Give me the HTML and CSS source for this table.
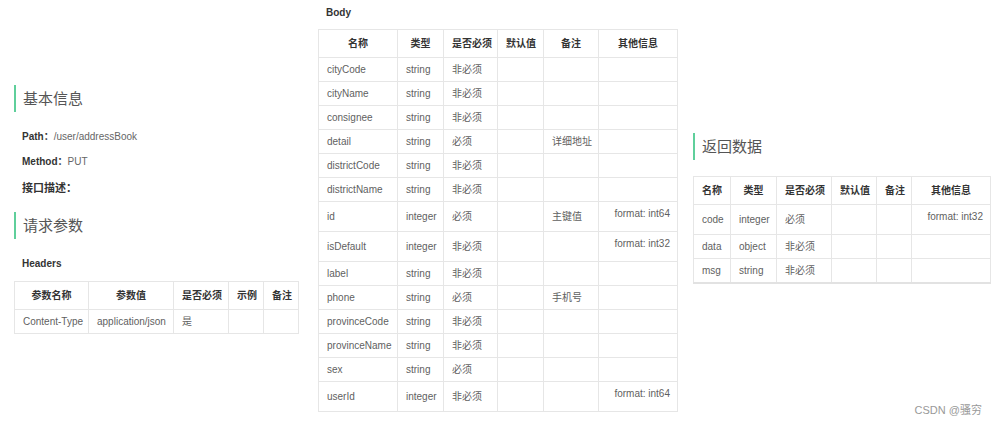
FILE: index.html
```html
<!DOCTYPE html>
<html lang="zh-CN">
<head>
<meta charset="utf-8">
<title>接口文档</title>
<link rel="stylesheet" href="styles.css">
</head>
<body>
<div class="page">
  <section class="col col-left">
    <h2 class="section-title">基本信息</h2>
    <p class="info info-path"><b>Path：</b><span>/user/addressBook</span></p>
    <p class="info info-method"><b>Method：</b><span>PUT</span></p>
    <p class="info info-desc"><b>接口描述：</b></p>
    <h2 class="section-title title-req">请求参数</h2>
    <h3 class="sub-title sub-headers">Headers</h3>
    <table class="tbl tbl-headers">
      <colgroup>
        <col class="w74"><col class="w85"><col class="w55"><col class="w35"><col class="w35">
      </colgroup>
      <thead>
        <tr><th>参数名称</th><th>参数值</th><th>是否必须</th><th>示例</th><th>备注</th></tr>
      </thead>
      <tbody>
        <tr><td>Content-Type</td><td>application/json</td><td>是</td><td></td><td></td></tr>
      </tbody>
    </table>
  </section>

  <section class="col col-mid">
    <h3 class="sub-title sub-body">Body</h3>
    <table class="tbl tbl-body">
      <colgroup>
        <col class="w79"><col class="w46"><col class="w54"><col class="w46"><col class="w55"><col class="w79">
      </colgroup>
      <thead>
        <tr><th>名称</th><th>类型</th><th>是否必须</th><th>默认值</th><th>备注</th><th>其他信息</th></tr>
      </thead>
      <tbody>
        <tr><td>cityCode</td><td>string</td><td>非必须</td><td></td><td></td><td></td></tr>
        <tr><td>cityName</td><td>string</td><td>非必须</td><td></td><td></td><td></td></tr>
        <tr><td>consignee</td><td>string</td><td>非必须</td><td></td><td></td><td></td></tr>
        <tr><td>detail</td><td>string</td><td>必须</td><td></td><td>详细地址</td><td></td></tr>
        <tr><td>districtCode</td><td>string</td><td>非必须</td><td></td><td></td><td></td></tr>
        <tr><td>districtName</td><td>string</td><td>非必须</td><td></td><td></td><td></td></tr>
        <tr><td>id</td><td>integer</td><td>必须</td><td></td><td>主键值</td><td class="other"><div class="fmt">format: int64</div></td></tr>
        <tr><td>isDefault</td><td>integer</td><td>非必须</td><td></td><td></td><td class="other"><div class="fmt">format: int32</div></td></tr>
        <tr><td>label</td><td>string</td><td>非必须</td><td></td><td></td><td></td></tr>
        <tr><td>phone</td><td>string</td><td>必须</td><td></td><td>手机号</td><td></td></tr>
        <tr><td>provinceCode</td><td>string</td><td>非必须</td><td></td><td></td><td></td></tr>
        <tr><td>provinceName</td><td>string</td><td>非必须</td><td></td><td></td><td></td></tr>
        <tr><td>sex</td><td>string</td><td>必须</td><td></td><td></td><td></td></tr>
        <tr><td>userId</td><td>integer</td><td>非必须</td><td></td><td></td><td class="other"><div class="fmt">format: int64</div></td></tr>
      </tbody>
    </table>
  </section>

  <section class="col col-right">
    <h2 class="section-title">返回数据</h2>
    <table class="tbl tbl-resp">
      <colgroup>
        <col class="w37"><col class="w46"><col class="w55"><col class="w45"><col class="w35"><col class="w79">
      </colgroup>
      <thead>
        <tr><th>名称</th><th>类型</th><th>是否必须</th><th>默认值</th><th>备注</th><th>其他信息</th></tr>
      </thead>
      <tbody>
        <tr><td>code</td><td>integer</td><td>必须</td><td></td><td></td><td class="other"><div class="fmt">format: int32</div></td></tr>
        <tr><td>data</td><td>object</td><td>非必须</td><td></td><td></td><td></td></tr>
        <tr><td>msg</td><td>string</td><td>非必须</td><td></td><td></td><td></td></tr>
      </tbody>
    </table>
  </section>
</div>
<div class="watermark">CSDN @骚穷</div>
</body>
</html>
```

FILE: styles.css
```css
* { box-sizing: border-box; }

html, body {
  margin: 0;
  padding: 0;
  background: #fff;
}

body {
  font-family: "Liberation Sans", "Noto Sans CJK SC", sans-serif;
  font-size: 10px;
  color: #595959;
  width: 1001px;
  height: 425px;
  overflow: hidden;
  position: relative;
}

.page {
  display: flex;
  align-items: flex-start;
}

.col-left {
  width: 298px;
  padding-left: 14px;
  padding-top: 85px;
}

.col-mid {
  margin-left: 20px;
  width: 359px;
  padding-top: 6px;
}

.col-right {
  margin-left: 16px;
  width: 297px;
  padding-top: 133px;
}

.section-title {
  margin: 0;
  height: 27px;
  line-height: 27px;
  border-left: 2px solid #5fcf9b;
  padding-left: 7px;
  font-size: 15px;
  font-weight: normal;
  color: #555;
}

.info {
  margin: 0;
  padding-left: 8px;
  line-height: 14px;
  color: #666;
}
.info b { color: #333; font-weight: bold; }
.info-path { margin-top: 18px; }
.info-method { margin-top: 11px; }
.info-desc { margin-top: 12px; font-size: 11px; }

.title-req { margin-top: 17px; }

.sub-title {
  margin: 0;
  padding-left: 8px;
  line-height: 14px;
  font-size: 10px;
  font-weight: bold;
  color: #333;
}
.sub-headers { margin-top: 18px; margin-bottom: 10px; }
.sub-body { margin-bottom: 9px; }

.tbl {
  border-collapse: collapse;
  table-layout: fixed;
  border: 1px solid #e2e2e2;
}
.tbl-headers { width: 284px; }
.tbl-body { width: 359px; }
.tbl-resp {
  width: 297px;
  margin-top: 16px;
  border-bottom: 2px solid #e2e2e2;
}

.tbl th,
.tbl td {
  border: 1px solid #e6e6e6;
  padding: 5px 8px;
  line-height: 13px;
  vertical-align: middle;
  white-space: nowrap;
  text-align: left;
}

.tbl th {
  padding-top: 7px;
  padding-bottom: 7px;
  text-align: center;
  font-weight: bold;
  color: #333;
  background: #fff;
}

.tbl td { color: #5f5f5f; }

.tbl td.other { padding-right: 7px; }

.fmt {
  text-align: right;
  margin-bottom: 6px;
}

.w35 { width: 35px; }
.w37 { width: 37px; }
.w45 { width: 45px; }
.w46 { width: 46px; }
.w54 { width: 54px; }
.w55 { width: 55px; }
.w74 { width: 74px; }
.w79 { width: 79px; }
.w85 { width: 85px; }

.watermark {
  position: absolute;
  right: 19px;
  bottom: 8px;
  font-size: 11px;
  line-height: 13px;
  color: #999;
}
```
